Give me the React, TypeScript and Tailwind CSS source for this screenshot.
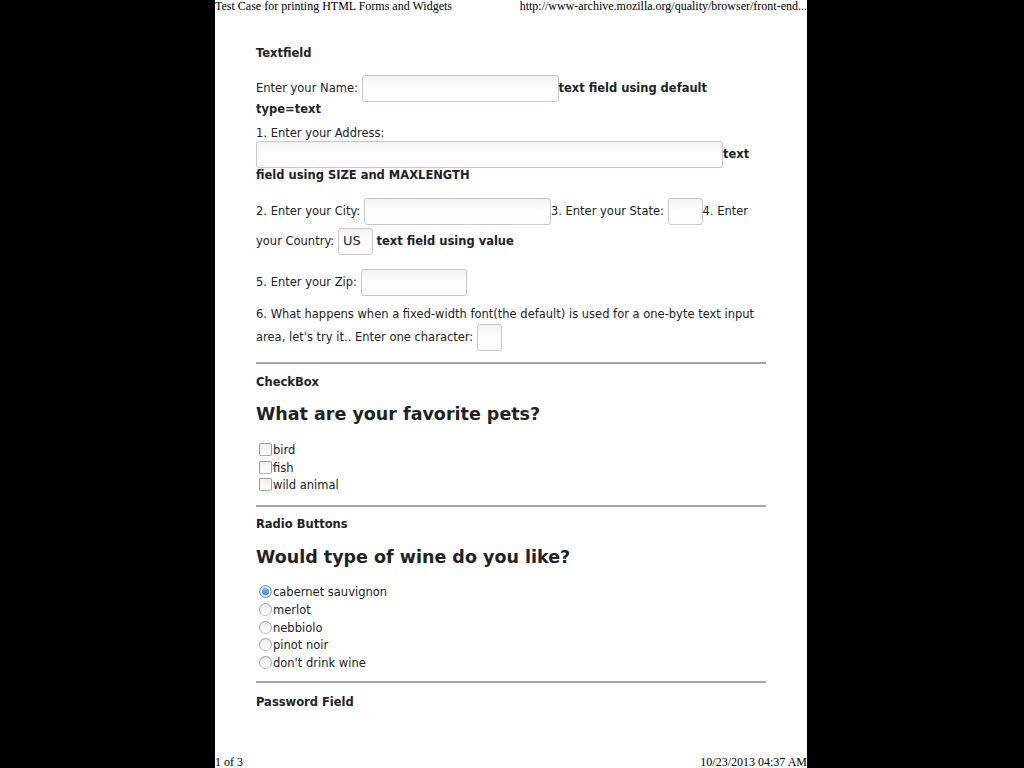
import React from 'react';

const field =
  'inline-block align-middle h-[27px] rounded-[3px] border border-[#c8c8c8] bg-gradient-to-b from-[#f2f2f2] via-white to-[#fffafd] px-1 text-[13px] text-[#222] outline-none';

function Box() {
  return (
    <span className="inline-block align-[-2px] w-[13px] h-[13px] ml-[3px] mr-[1px] rounded-[2px] border border-[#9a9a9a] border-b-[#7fd07f] bg-gradient-to-b from-[#f0f0f0] to-white" />
  );
}

function Radio({ checked }: { checked?: boolean }) {
  return checked ? (
    <span className="inline-block align-[-2px] w-[13px] h-[13px] ml-[3px] mr-[1px] rounded-full border border-[#7d9fc9] bg-gradient-to-b from-[#9cc3f0] to-[#2f6fd0] shadow-[inset_0_0_0_2px_#d9e8fa]" />
  ) : (
    <span className="inline-block align-[-2px] w-[13px] h-[13px] ml-[3px] mr-[1px] rounded-full border border-[#a8a8a8] border-b-[#a6dba6] bg-gradient-to-b from-[#ececec] to-white" />
  );
}

export default function App() {
  return (
    <div className="min-h-screen bg-black flex">
      <div className="ml-[215px] w-[592px] h-[768px] bg-white flex flex-col text-black">
        {/* running header */}
        <div className="flex justify-between h-[12px] text-[12px] leading-[12px] font-['Liberation_Serif',serif] whitespace-nowrap">
          <span>Test Case for printing HTML Forms and Widgets</span>
          <span>http://www-archive.mozilla.org/quality/browser/front-end...</span>
        </div>

        <div className="px-[41px] pt-[33px] font-['DejaVu_Sans',sans-serif] text-[11.5px] text-[#222]">
          <p className="font-bold">Textfield</p>

          <p className="mt-[13px] leading-[14px]">
            Enter your Name: <input className={`${field} w-[197px]`} readOnly />
            <b>text field using default type=text</b>
          </p>

          <p className="mt-[9px]">1. Enter your Address:</p>
          <p className="mt-[-2px] leading-[14px]">
            <input className={`${field} w-[467px]`} readOnly />
            <b>text field using SIZE and MAXLENGTH</b>
          </p>

          <p className="mt-[14px] leading-[30px]">
            2. Enter your City: <input className={`${field} w-[187px]`} readOnly />
            3. Enter your State: <input className={`${field} w-[35px]`} readOnly />
            4. Enter your Country: <input className={`${field} w-[35px]`} defaultValue="US" readOnly />{' '}
            <b>text field using value</b>
          </p>

          <p className="mt-[13px]">
            5. Enter your Zip: <input className={`${field} w-[106px]`} readOnly />
          </p>

          <p className="mt-[8px] leading-[20px]">
            6. What happens when a fixed-width font(the default) is used for a one-byte text input area,
            let's try it.. Enter one character: <input className={`${field} w-[25px]`} readOnly />
          </p>

          <hr className="mt-[11px] border-0 border-t-2 border-[#a6a6a6]" />

          <p className="mt-[10px] font-bold">CheckBox</p>
          <h2 className="mt-[10px] text-[17.5px] font-bold">What are your favorite pets?</h2>
          <div className="mt-[15px] leading-[17.5px]">
            <div><Box />bird</div>
            <div><Box />fish</div>
            <div><Box />wild animal</div>
          </div>

          <hr className="mt-[10px] border-0 border-t-2 border-[#a6a6a6]" />

          <p className="mt-[9px] font-bold">Radio Buttons</p>
          <h2 className="mt-[11px] text-[17.5px] font-bold">Would type of wine do you like?</h2>
          <div className="mt-[14px] leading-[17.75px]">
            <div><Radio checked />cabernet sauvignon</div>
            <div><Radio />merlot</div>
            <div><Radio />nebbiolo</div>
            <div><Radio />pinot noir</div>
            <div><Radio />don't drink wine</div>
          </div>

          <hr className="mt-[8px] border-0 border-t-2 border-[#a6a6a6]" />

          <p className="mt-[11px] font-bold">Password Field</p>
        </div>

        {/* running footer */}
        <div className="mt-auto flex justify-between h-[12px] text-[12px] leading-[12px] font-['Liberation_Serif',serif] whitespace-nowrap">
          <span>1 of 3</span>
          <span>10/23/2013 04:37 AM</span>
        </div>
      </div>
    </div>
  );
}
